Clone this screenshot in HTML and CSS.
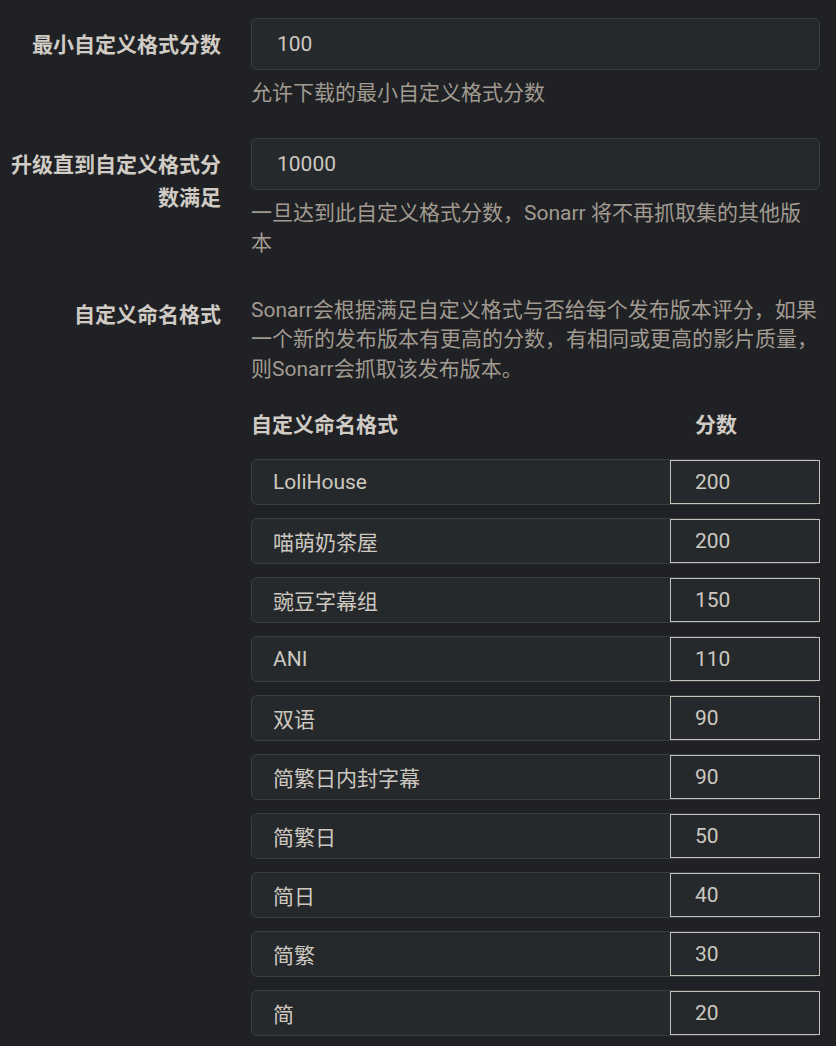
FILE: index.html
```html
<!DOCTYPE html>
<html lang="zh-CN">
<head>
<meta charset="utf-8">
<title>自定义格式</title>
<link rel="stylesheet" href="styles.css">
</head>
<body>
<div class="page">
  <div class="group">
    <div class="label">最小自定义格式分数</div>
    <div class="field">
      <div class="input">100</div>
      <div class="help">允许下载的最小自定义格式分数</div>
    </div>
  </div>
  <div class="group">
    <div class="label">升级直到自定义格式分数满足</div>
    <div class="field">
      <div class="input">10000</div>
      <div class="help">一旦达到此自定义格式分数，Sonarr 将不再抓取集的其他版本</div>
    </div>
  </div>
  <div class="group">
    <div class="label">自定义命名格式</div>
    <div class="field field-desc">
      <div class="desc">Sonarr会根据满足自定义格式与否给每个发布版本评分，如果一个新的发布版本有更高的分数，有相同或更高的影片质量，则Sonarr会抓取该发布版本。</div>
      <div class="table-head">
        <div class="th-name">自定义命名格式</div>
        <div class="th-score">分数</div>
      </div>
      <div class="rows">
        <div class="row"><div class="name">LoliHouse</div><div class="score">200</div></div>
        <div class="row"><div class="name">喵萌奶茶屋</div><div class="score">200</div></div>
        <div class="row"><div class="name">豌豆字幕组</div><div class="score">150</div></div>
        <div class="row"><div class="name">ANI</div><div class="score">110</div></div>
        <div class="row"><div class="name">双语</div><div class="score">90</div></div>
        <div class="row"><div class="name">简繁日内封字幕</div><div class="score">90</div></div>
        <div class="row"><div class="name">简繁日</div><div class="score">50</div></div>
        <div class="row"><div class="name">简日</div><div class="score">40</div></div>
        <div class="row"><div class="name">简繁</div><div class="score">30</div></div>
        <div class="row"><div class="name">简</div><div class="score">20</div></div>
      </div>
    </div>
  </div>
</div>
</body>
</html>
```

FILE: styles.css
```css
html, body {
  margin: 0;
  background: #202124;
}

body {
  font-family: Roboto, "Noto Sans CJK SC", sans-serif;
  font-size: 21px;
  color: #ccc8c0;
  overflow: hidden;
}

.page {
  padding: 18px 16px 0 0;
}

.group {
  display: flex;
  margin-bottom: 30px;
}

.label {
  flex: none;
  width: 221px;
  margin-right: 30px;
  padding-top: 11px;
  text-align: right;
  font-weight: bold;
  line-height: 33px;
  color: #d0ccc5;
}

.field {
  flex: 1;
  min-width: 0;
}

.input {
  box-sizing: border-box;
  height: 52px;
  display: flex;
  align-items: center;
  padding: 0 25px;
  background: #26292b;
  border: 1px solid #393d40;
  border-radius: 6px;
  color: #ccc8c0;
}

.help {
  margin-top: 8px;
  line-height: 30px;
  color: #a19b91;
}

.field-desc {
  padding-top: 8px;
}

.desc {
  line-height: 29.4px;
  color: #a19b91;
}

.table-head {
  display: flex;
  margin-top: 25px;
  line-height: 33px;
  font-weight: bold;
  color: #d0ccc5;
}

.th-name {
  flex: 1;
}

.th-score {
  box-sizing: border-box;
  width: 150px;
  padding-left: 25px;
}

.rows {
  margin-top: 17px;
  display: flex;
  flex-direction: column;
  gap: 13px;
}

.row {
  box-sizing: border-box;
  height: 46px;
  display: flex;
  background: #26292b;
  border: 1px solid #3a3e41;
  border-radius: 6px;
}

.name {
  flex: 1;
  display: flex;
  align-items: center;
  padding-left: 21px;
}

.score {
  box-sizing: border-box;
  flex: none;
  width: 150px;
  margin-right: -1px;
  display: flex;
  align-items: center;
  padding-left: 24px;
  border: 1px solid #c6c1b9;
  background: #26292b;
}
```
